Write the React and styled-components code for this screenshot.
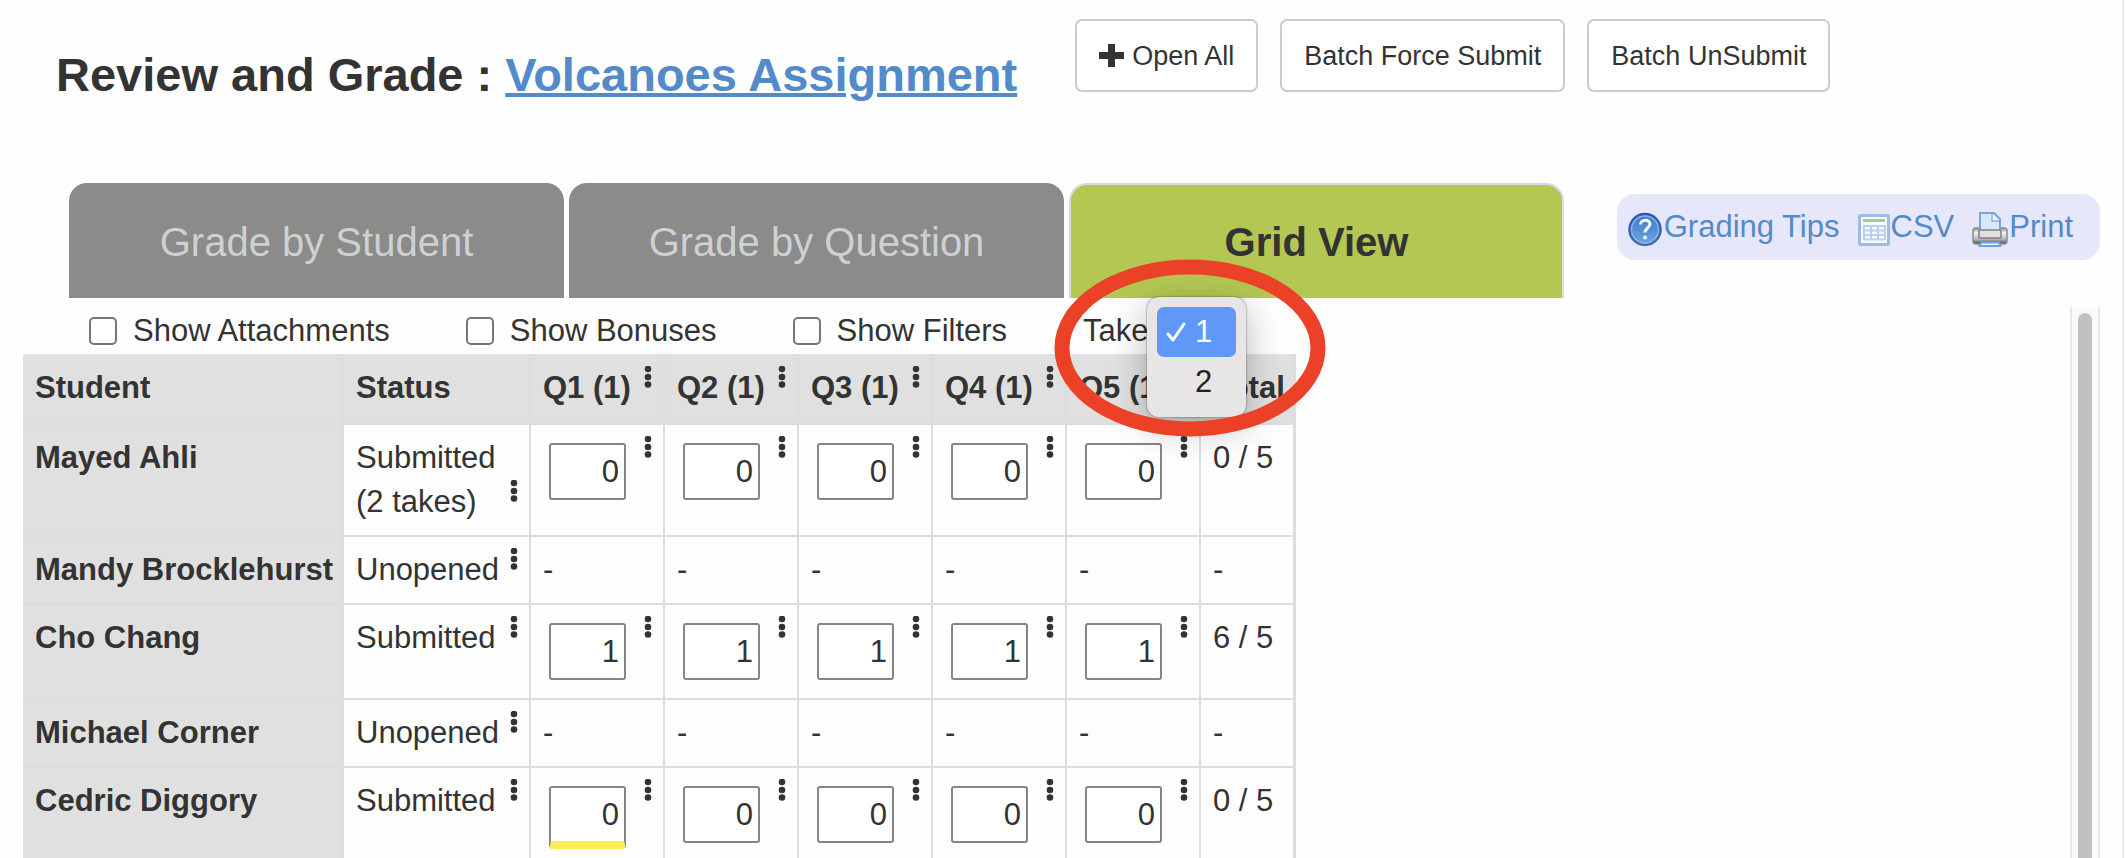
import React, { useState } from 'react';
import styled, { createGlobalStyle } from 'styled-components';

const GlobalStyle = createGlobalStyle`
  * {
    box-sizing: border-box;
  }
  body {
    margin: 0;
    background: #fefefe;
    color: #333;
    font-family: 'Liberation Sans', Arial, sans-serif;
    font-size: 31px;
    line-height: 44px;
  }
  a {
    color: #528aca;
  }
`;

const Page = styled.div`
  height: 100vh;
  display: flex;
  flex-direction: column;
  overflow: hidden;
  border-right: 2px solid #ebebeb;
  margin-right: 2px;
`;

const TopBar = styled.header`
  display: flex;
  align-items: flex-start;
  gap: 58px;
  padding: 19px 24px 0 56px;
`;

const Title = styled.h1`
  margin: 26px 0 0;
  font-size: 47px;
  line-height: 60px;
  font-weight: bold;
  white-space: nowrap;
  a {
    text-decoration-thickness: 4px;
  }
`;

const Actions = styled.div`
  display: flex;
  gap: 22px;
`;

const Button = styled.button`
  display: flex;
  align-items: center;
  gap: 8px;
  height: 73px;
  padding: 0 22px;
  border: 2px solid #ccc;
  border-radius: 7px;
  background: #fff;
  color: #333;
  font: inherit;
  font-size: 27px;
  white-space: nowrap;
  cursor: pointer;
`;

const NavRow = styled.div`
  display: flex;
  align-items: flex-start;
  justify-content: space-between;
  margin-top: 78px;
  padding: 0 22px 0 69px;
`;

const Tabs = styled.nav`
  display: flex;
  gap: 5px;
`;

const Tab = styled.button`
  width: 495px;
  height: 115px;
  padding: 0;
  border: solid ${props => (props.$active ? '#d8dadf' : '#8b8b89')};
  border-width: 2px 2px 0;
  border-radius: 18px 18px 0 0;
  background: ${props => (props.$active ? '#b4c753' : '#8b8b89')};
  color: ${props => (props.$active ? '#333' : '#cdd1d4')};
  font: inherit;
  font-size: 40px;
  font-weight: ${props => (props.$active ? 'bold' : 'normal')};
  cursor: pointer;
`;

const Tools = styled.div`
  display: flex;
  gap: 18px;
  height: 66px;
  margin-top: 11px;
  padding: 11px 27px 0 11px;
  border-radius: 18px;
  background: #e7e7fc;
`;

const ToolLink = styled.a`
  display: flex;
  gap: 1px;
  text-decoration: none;
  svg {
    margin-top: 7px;
  }
`;

const Main = styled.main`
  flex: 1;
  min-height: 0;
  display: flex;
  justify-content: space-between;
  padding: 0 22px 0 23px;
`;

const Options = styled.form`
  display: flex;
  align-items: center;
  height: 56px;
  padding: 10px 0 0 66px;
`;

const Check = styled.label`
  display: flex;
  align-items: center;
  gap: 16px;
  margin-right: 76px;
  white-space: nowrap;
`;

const CheckBox = styled.input`
  appearance: none;
  width: 28px;
  height: 28px;
  margin: 0;
  border: 2px solid #767676;
  border-radius: 5px;
  background: #fff;
  &:checked {
    background: #6098f7;
  }
`;

const TakePicker = styled.div`
  position: relative;
  display: flex;
  align-items: center;
  gap: 8px;
`;

const TakeSelect = styled.select`
  width: 80px;
  height: 36px;
  font: inherit;
  font-size: 27px;
`;

const Menu = styled.ul`
  position: absolute;
  top: -12px;
  left: 64px;
  z-index: 1;
  width: 99px;
  height: 120px;
  margin: 0;
  padding: 10px;
  border-radius: 12px;
  background: #e8e5e6;
  box-shadow: 0 0 2px rgba(0, 0, 0, 0.6), 0 10px 36px rgba(0, 0, 0, 0.28);
  list-style: none;
`;

const MenuItem = styled.li`
  display: grid;
  grid-template-columns: 20px auto;
  column-gap: 9px;
  align-items: center;
  height: 50px;
  padding-left: 9px;
  border-radius: 7px;
  background: ${props => (props.$selected ? '#6098f7' : 'transparent')};
  color: ${props => (props.$selected ? '#fff' : '#222')};
`;

const Circle = styled.svg`
  position: absolute;
  top: -50px;
  left: -29px;
  z-index: 2;
  pointer-events: none;
`;

const Table = styled.table`
  width: 1273px;
  table-layout: fixed;
  border-collapse: separate;
  border-spacing: 0;
  border-right: 2px solid #ddd;
`;

const Col = styled.col`
  width: ${props => props.$width}px;
`;

const Cell = styled.td`
  padding: 11px 11px 11px 12px;
  border-right: 2px solid #ddd;
  border-bottom: 2px solid #ddd;
  vertical-align: top;
  text-align: left;
  white-space: nowrap;
  &:last-child {
    border-right-width: 1px;
  }
`;

const HeadCell = styled(Cell)`
  padding-top: 12px;
  padding-bottom: 13px;
  background: #e0e0e0;
`;

const NameCell = styled(Cell)`
  background: #e0e0e0;
`;

const Line = styled.div`
  display: flex;
  justify-content: space-between;
  align-items: flex-start;
`;

const DotsButton = styled.button`
  display: flex;
  width: 8px;
  padding: 0;
  border: 0;
  background: none;
  cursor: pointer;
`;

const Score = styled.input`
  width: 77px;
  height: ${props => (props.$changed ? 63 : 57)}px;
  margin: 7px 6px;
  padding: 0 5px 0 0;
  border: 2px solid #858585;
  border-bottom: ${props => (props.$changed ? '8px solid #fcee4f' : '2px solid #858585')};
  border-radius: 3px;
  background: #fff;
  color: #333;
  font: inherit;
  text-align: right;
`;

const ScrollTrack = styled.div`
  width: 30px;
  margin-top: 9px;
  padding: 6px 6px 0;
  border: solid #e8e8e8;
  border-width: 0 2px;
  background: #fafafa;
`;

const ScrollThumb = styled.div`
  height: 100%;
  border-radius: 8px 8px 0 0;
  background: #c1c1c1;
`;

const questions = ['Q1', 'Q2', 'Q3', 'Q4', 'Q5'];

const students = [
  { name: 'Mayed Ahli', status: ['Submitted', '(2 takes)'], score: '0', total: '0 / 5' },
  { name: 'Mandy Brocklehurst', status: ['Unopened'], total: '-' },
  { name: 'Cho Chang', status: ['Submitted'], score: '1', total: '6 / 5' },
  { name: 'Michael Corner', status: ['Unopened'], total: '-' },
  { name: 'Cedric Diggory', status: ['Submitted'], score: '0', total: '0 / 5', changed: 0 },
];

const Dots = ({ label }) => (
  <DotsButton type="button" aria-label={label}>
    <svg width="8" height="22" viewBox="0 0 8 22" fill="#333">
      <circle cx="4" cy="3" r="3.3" />
      <circle cx="4" cy="11" r="3.3" />
      <circle cx="4" cy="18.500" r="3.3" />
    </svg>
  </DotsButton>
);

const PlusIcon = () => (
  <svg width="25" height="25" viewBox="0 0 25 25">
    <path d="M9 1h7v8h9v7h-9v8H9v-8H0V9h9z" fill="#333" />
  </svg>
);

const HelpIcon = () => (
  <svg width="35" height="35" viewBox="0 0 35 35">
    <defs>
      <linearGradient id="help" x1="0" y1="0" x2="0" y2="1">
        <stop offset="0" stopColor="#3f78c4" />
        <stop offset="1" stopColor="#6ba6e2" />
      </linearGradient>
      <linearGradient id="helpRim" x1="0" y1="0" x2="0" y2="1">
        <stop offset="0" stopColor="#2458b4" />
        <stop offset="1" stopColor="#4a6ba6" />
      </linearGradient>
    </defs>
    <circle cx="17" cy="17.500" r="15.500" fill="url(#help)" stroke="url(#helpRim)" strokeWidth="2.500" />
    <circle cx="17" cy="17.500" r="13.500" fill="none" stroke="#86b4e6" strokeWidth="1.500" />
    <path
      d="M12.500 12.500c0-5.500 9.500-5.500 9.500-.5 0 3.500-5 4.500-5 8.500"
      fill="none"
      stroke="#f2f8ff"
      strokeWidth="3"
    />
    <circle cx="17" cy="25.500" r="2" fill="#f2f8ff" />
  </svg>
);

const SheetIcon = () => (
  <svg width="32" height="35" viewBox="0 0 32 35">
    <rect x="1.500" y="3.500" width="29" height="29" rx="1" fill="#f8fbff" stroke="#9dbbe8" strokeWidth="3" />
    <path d="M5 8.500h22" stroke="#a3cf8c" strokeWidth="3" />
    <path
      d="M6 14h21M6 18.500h21M6 23h21M6 27.500h21M6 13v15M13 13v15M20 13v15M27 13v15"
      fill="none"
      stroke="#b9d0ee"
      strokeWidth="2"
    />
  </svg>
);

const PrinterIcon = () => (
  <svg width="36" height="35" viewBox="0 0 36 35">
    <defs>
      <linearGradient id="printer" x1="0" y1="0" x2="0" y2="1">
        <stop offset="0" stopColor="#8d8d8d" />
        <stop offset="0.3" stopColor="#f4f4f4" />
        <stop offset="0.7" stopColor="#b5b5b5" />
        <stop offset="1" stopColor="#4a4a4a" />
      </linearGradient>
    </defs>
    <rect x="1" y="16" width="34" height="16" rx="3" fill="url(#printer)" stroke="#8a8a8a" strokeWidth="1.500" />
    <path d="M8 19V1h14l6 6v12z" fill="#d8e8fc" stroke="#7ba3dc" strokeWidth="2" />
    <path d="M20 2v7h7" fill="#f4f9ff" stroke="#8db2e2" strokeWidth="1.500" />
    <rect x="7" y="18" width="22" height="8" rx="1" fill="#e0e0e0" stroke="#7d7d7d" strokeWidth="1.500" />
    <path d="M9 30.500h18l1.500 3.500h-21z" fill="#eef5ff" stroke="#6f9fdd" strokeWidth="2" />
  </svg>
);

const CheckMark = () => (
  <svg width="20" height="20" viewBox="0 0 20 20">
    <path d="M2 12l5 6L18 2" fill="none" stroke="#fff" strokeWidth="3" strokeLinecap="round" strokeLinejoin="round" />
  </svg>
);

const App = () => {
  const [take, setTake] = useState('1');
  return (
    <>
      <GlobalStyle />
      <Page>
        <TopBar>
          <Title>
            Review and Grade : <a href="#assignment">Volcanoes Assignment</a>
          </Title>
          <Actions>
            <Button>
              <PlusIcon />
              Open All
            </Button>
            <Button>Batch Force Submit</Button>
            <Button>Batch UnSubmit</Button>
          </Actions>
        </TopBar>
        <NavRow>
          <Tabs>
            <Tab>Grade by Student</Tab>
            <Tab>Grade by Question</Tab>
            <Tab $active>Grid View</Tab>
          </Tabs>
          <Tools>
            <ToolLink href="#tips">
              <HelpIcon />
              Grading Tips
            </ToolLink>
            <ToolLink href="#csv">
              <SheetIcon />
              CSV
            </ToolLink>
            <ToolLink href="#print">
              <PrinterIcon />
              Print
            </ToolLink>
          </Tools>
        </NavRow>
        <Main>
          <div>
            <Options>
              {['Show Attachments', 'Show Bonuses', 'Show Filters'].map(label => (
                <Check key={label}>
                  <CheckBox type="checkbox" />
                  {label}
                </Check>
              ))}
              <TakePicker>
                <label htmlFor="take">Take</label>
                <TakeSelect id="take" value={take} onChange={e => setTake(e.target.value)}>
                  <option>1</option>
                  <option>2</option>
                </TakeSelect>
                <Menu>
                  {['1', '2'].map(n => (
                    <MenuItem key={n} $selected={n === take} onClick={() => setTake(n)}>
                      {n === take ? <CheckMark /> : <span />}
                      {n}
                    </MenuItem>
                  ))}
                </Menu>
                <Circle width="272" height="178" viewBox="0 0 272 178">
                  <ellipse cx="136" cy="89" rx="128" ry="81" fill="none" stroke="#eb4126" strokeWidth="15" />
                </Circle>
              </TakePicker>
            </Options>
            <Table>
              <colgroup>
                <Col $width={321} />
                <Col $width={187} />
                {questions.map(q => (
                  <Col key={q} $width={134} />
                ))}
                <Col />
              </colgroup>
              <thead>
                <tr>
                  <HeadCell as="th">Student</HeadCell>
                  <HeadCell as="th">Status</HeadCell>
                  {questions.map(q => (
                    <HeadCell as="th" key={q}>
                      <Line>
                        {q} (1)
                        <Dots label={`${q} menu`} />
                      </Line>
                    </HeadCell>
                  ))}
                  <HeadCell as="th">Total</HeadCell>
                </tr>
              </thead>
              <tbody>
                {students.map(student => (
                  <tr key={student.name}>
                    <NameCell as="th">{student.name}</NameCell>
                    <Cell>
                      {student.status.map((text, i) => (
                        <Line key={text}>
                          {text}
                          {i === student.status.length - 1 && <Dots label={`${student.name} menu`} />}
                        </Line>
                      ))}
                    </Cell>
                    {questions.map((q, i) => (
                      <Cell key={q}>
                        {student.score ? (
                          <Line>
                            <Score
                              aria-label={`${student.name} ${q}`}
                              defaultValue={student.score}
                              $changed={student.changed === i}
                            />
                            <Dots label={`${student.name} ${q} menu`} />
                          </Line>
                        ) : (
                          '-'
                        )}
                      </Cell>
                    ))}
                    <Cell>{student.total}</Cell>
                  </tr>
                ))}
              </tbody>
            </Table>
          </div>
          <ScrollTrack>
            <ScrollThumb />
          </ScrollTrack>
        </Main>
      </Page>
    </>
  );
};

export default App;
